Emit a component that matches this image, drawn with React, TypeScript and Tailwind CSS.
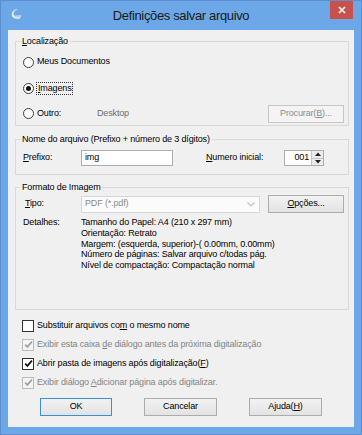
import React from 'react';

const U = ({ children }: { children: React.ReactNode }) => (
    <span className="underline decoration-[0.5px] underline-offset-[1px]">{children}</span>
);

const Radio = ({ checked }: { checked?: boolean }) => (
    <span className="flex h-[11px] w-[11px] shrink-0 items-center justify-center rounded-full border border-[#3c3c3c] bg-white">
        {checked && <span className="h-[5px] w-[5px] rounded-full bg-[#111]" />}
    </span>
);

const Check = ({ checked, disabled }: { checked?: boolean; disabled?: boolean }) => (
    <span
        className={
            disabled
                ? 'flex h-[12px] w-[12px] shrink-0 items-center justify-center border border-[#bcbcbc] bg-[#f4f4f4]'
                : 'flex h-[12px] w-[12px] shrink-0 items-center justify-center border border-[#333] bg-white'
        }
    >
        {checked && (
            <svg width="9" height="9" viewBox="0 0 9 9">
                <path d="M1.2 4.6 L3.4 6.9 L7.9 1.6" stroke={disabled ? '#a2a2a2' : '#111'} strokeWidth="1.7" fill="none" />
            </svg>
        )}
    </span>
);

const Btn = ({ children, className, def, disabled }: { children: React.ReactNode; className: string; def?: boolean; disabled?: boolean }) => {
    let look = 'border-[#acacac] bg-gradient-to-b from-[#f2f2f2] to-[#e3e3e3] text-black';
    if (def) look = 'border-[#3c8fd6] bg-gradient-to-b from-[#f2f2f2] to-[#e3e3e3] text-black';
    if (disabled) look = 'border-[#c6c6c6] bg-[#f4f4f4] text-[#8b8b8b]';
    return <div className={`flex h-[18px] items-center justify-center border ${look} ${className}`}>{children}</div>;
};

const Group = ({ title, children, className }: { title: React.ReactNode; children: React.ReactNode; className: string }) => (
    <fieldset className={`border border-[#d9d9d9] pl-[7px] pr-[4px] ${className}`}>
        <legend className="-ml-[3px] px-[2px] leading-[12px]">{title}</legend>
        {children}
    </fieldset>
);

const details = [
    'Tamanho do Papel: A4 (210 x 297 mm)',
    'Orientação: Retrato',
    'Margem: (esquerda, superior)-( 0.00mm, 0.00mm)',
    'Número de páginas: Salvar arquivo c/todas pág.',
    'Nível de compactação: Compactação normal',
];

const App = () => {
    return (
        <div className="flex h-[435px] w-[362px] flex-col border border-[#5b8ecb] bg-[#6ca8e8] font-['Liberation_Sans',Arial,sans-serif] text-[9px] tracking-[-0.15px] text-black">
            {/* title bar */}
            <div className="grid h-[29px] grid-cols-[40px_1fr_40px]">
                <div className="pl-[10px] pt-[7px]">
                    <svg width="11" height="12" viewBox="0 0 11 12">
                        <path d="M7 1 C4 2 2 4 2.5 6.5 C3 8.5 5.5 9.5 9 9 L9 10.5 C5 11.5 1 10 0.8 6.8 C0.6 3.5 3.5 1 7 1 Z" fill="#e9f2fc" />
                        <path d="M3 7.5 L10 7 L10 9.3 L4.5 9.6 Z" fill="#b8d2f0" />
                    </svg>
                </div>
                <div className="pt-[5px] text-center text-[13px] tracking-[-0.35px] text-[#1a1a1a]">Definições salvar arquivo</div>
                <div className="flex justify-end pr-[8px]">
                    <div className="flex h-[18px] w-[23px] items-center justify-center bg-[#c9514b]">
                        <svg width="8" height="8" viewBox="0 0 8 8">
                            <path d="M1 1 L7 7 M7 1 L1 7" stroke="#fff" strokeWidth="1.6" />
                        </svg>
                    </div>
                </div>
            </div>

            {/* client area */}
            <div className="mx-[7px] flex h-[397px] flex-col bg-[#f0f0f0] pl-[7px] pr-[5px] pt-[5px]">
                <Group title={<><U>L</U>ocalização</>} className="pb-[2px]">
                    <div className="flex flex-col gap-[8px] pt-[6px]">
                        <div className="flex h-[18px] items-center gap-[3px]">
                            <Radio />
                            <span>Meus Documentos</span>
                        </div>
                        <div className="flex h-[18px] items-center gap-[2px]">
                            <Radio checked />
                            <span className="border border-dotted border-[#333] px-[1px] leading-[11px]">
                                <U>I</U>magens
                            </span>
                        </div>
                        <div className="-mt-[1px] flex h-[19px] items-center">
                            <Radio />
                            <span className="ml-[3px] w-[60px]">Outro:</span>
                            <span className="text-[#6d6d6d]">Desktop</span>
                            <Btn className="ml-auto w-[76px]" disabled>
                                Procurar(<U>B</U>)...
                            </Btn>
                        </div>
                    </div>
                </Group>

                <Group title="Nome do arquivo (Prefixo + número de 3 dígitos)" className="mt-[7px] pb-[8px]">
                    <div className="flex h-[16px] items-center mt-[5px]">
                        <span className="w-[58px]">
                            <U>P</U>refixo:
                        </span>
                        <div className="flex h-[16px] w-[92px] items-center border border-[#abadb3] bg-white pl-[3px]">img</div>
                        <span className="ml-[33px] w-[78px]">
                            <U>N</U>umero inicial:
                        </span>
                        <div className="flex h-[16px] w-[40px] border border-[#abadb3] bg-white">
                            <div className="flex flex-1 items-center justify-end pr-[2px]">001</div>
                            <div className="flex w-[12px] flex-col border-l border-[#c4c4c4] bg-[#ececec]">
                                <div className="flex flex-1 items-center justify-center border-b border-[#c4c4c4]">
                                    <svg width="6" height="4" viewBox="0 0 6 4">
                                        <path d="M0 4 L3 0.5 L6 4 Z" fill="#222" />
                                    </svg>
                                </div>
                                <div className="flex flex-1 items-center justify-center">
                                    <svg width="6" height="4" viewBox="0 0 6 4">
                                        <path d="M0 0 L3 3.5 L6 0 Z" fill="#222" />
                                    </svg>
                                </div>
                            </div>
                        </div>
                    </div>
                </Group>

                <Group title="Formato de Imagem" className="mt-[6px] h-[129px] pt-[2px]">
                    <div className="flex h-[18px] items-center">
                        <span className="w-[58px] pl-[2px]">
                            <U>T</U>ipo:
                        </span>
                        <div className="flex h-[17px] w-[179px] items-center justify-between border border-[#d6d6d6] bg-[#fbfbfb] pl-[3px] pr-[4px] text-[#8a8a8a]">
                            <span>PDF (*.pdf)</span>
                            <svg width="8" height="5" viewBox="0 0 8 5">
                                <path d="M0.5 0.5 L4 4 L7.5 0.5" stroke="#c2c2c2" strokeWidth="1.2" fill="none" />
                            </svg>
                        </div>
                        <Btn className="ml-auto w-[76px]">
                            <U>O</U>pções...
                        </Btn>
                    </div>
                    <div className="mt-[4px] flex leading-[10.75px]">
                        <span className="w-[58px]">Detalhes:</span>
                        <div className="flex flex-col">
                            {details.map((d) => (
                                <span key={d}>{d}</span>
                            ))}
                        </div>
                    </div>
                </Group>

                <div className="mt-[6px] flex flex-col pl-[7px]">
                    <div className="flex h-[19px] items-center gap-[3px]">
                        <Check />
                        <span>
                            Substituir arquivos co<U>m</U> o mesmo nome
                        </span>
                    </div>
                    <div className="flex h-[19px] items-center gap-[3px] text-[#838383]">
                        <Check checked disabled />
                        <span>
                            Exibir esta caixa <U>d</U>e diálogo antes da próxima digitalização
                        </span>
                    </div>
                    <div className="flex h-[19px] items-center gap-[3px]">
                        <Check checked />
                        <span>
                            Abrir pasta de imagens após digitalização(<U>F</U>)
                        </span>
                    </div>
                    <div className="flex h-[19px] items-center gap-[3px] text-[#838383]">
                        <Check checked disabled />
                        <span>
                            Exibir diálogo <U>A</U>dicionar página após digitalizar.
                        </span>
                    </div>
                </div>

                <div className="mt-[6px] flex gap-[32px] pl-[25px]">
                    <Btn className="w-[72px]" def>
                        OK
                    </Btn>
                    <Btn className="w-[73px]">Cancelar</Btn>
                    <Btn className="w-[73px]">
                        Ajuda(<U>H</U>)
                    </Btn>
                </div>
            </div>
        </div>
    );
};

export default App;
